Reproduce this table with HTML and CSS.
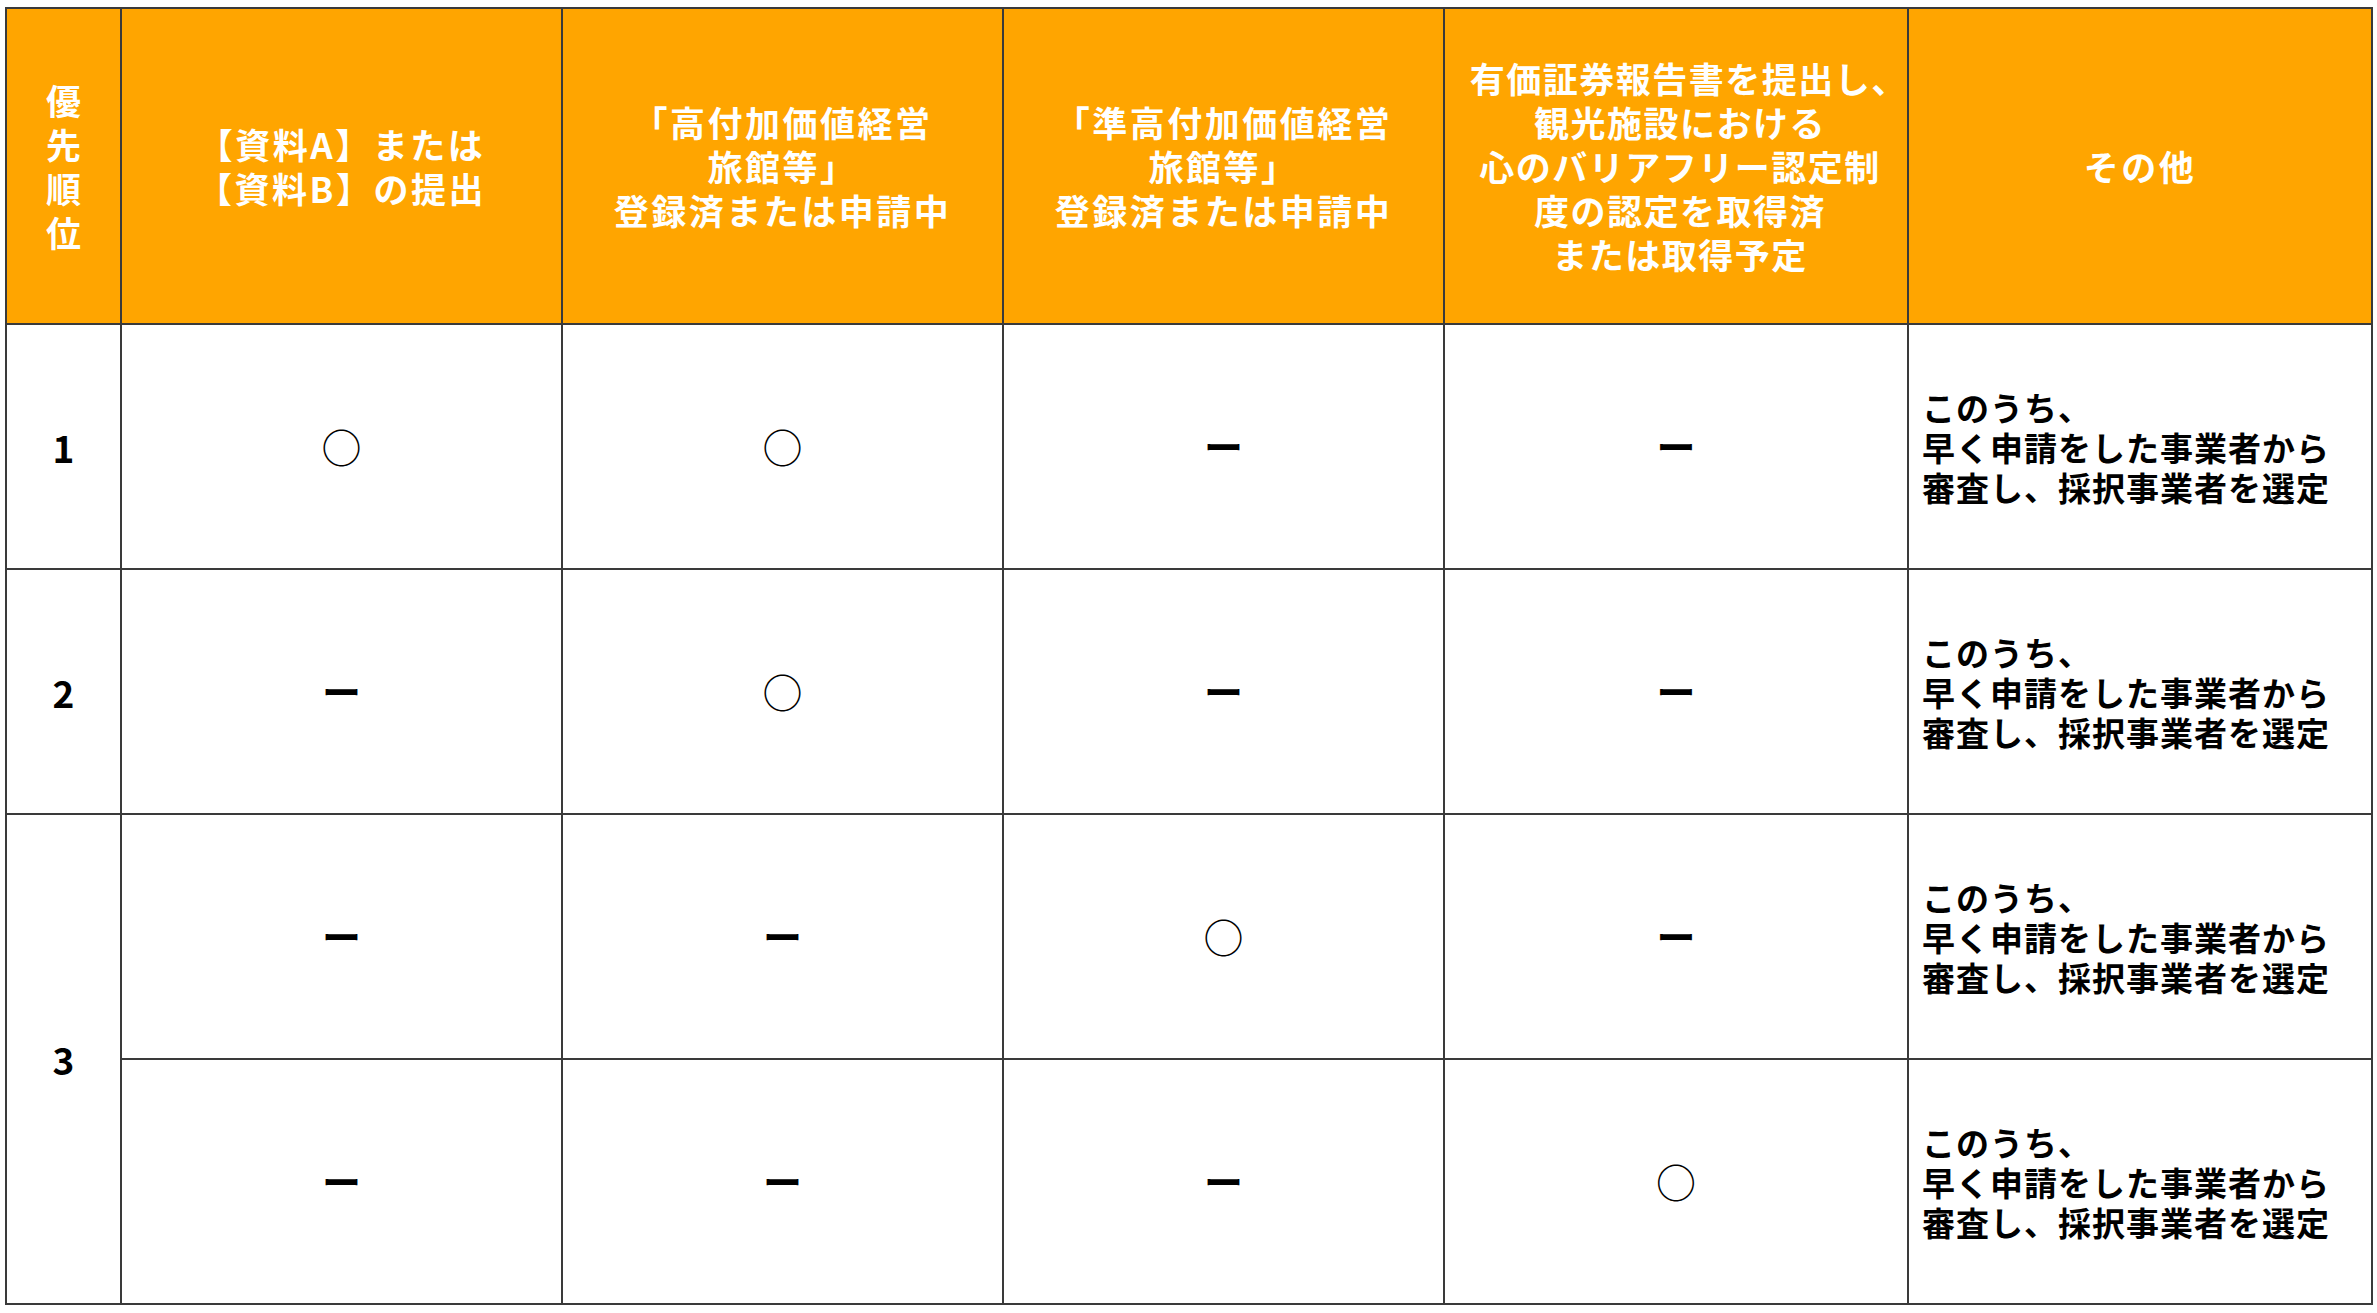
FILE: index.html
```html
<!DOCTYPE html>
<html lang="ja">
<head>
<meta charset="utf-8">
<title>優先順位</title>
<link rel="stylesheet" href="styles.css">
</head>
<body>
<table class="priority">
  <colgroup>
    <col class="c-rank">
    <col class="c-mid">
    <col class="c-mid">
    <col class="c-mid">
    <col class="c-wide">
    <col class="c-wide">
  </colgroup>
  <thead>
    <tr class="head-row">
      <th class="rank-head">優<br>先<br>順<br>位</th>
      <th>【資料A】または<br>【資料B】の提出</th>
      <th>「高付加価値経営<br>旅館等」<br>登録済または申請中</th>
      <th>「準高付加価値経営<br>旅館等」<br>登録済または申請中</th>
      <th class="long-head">有価証券報告書を提出し<span class="punct">、</span><br>観光施設における<br>心のバリアフリー認定制<br>度の認定を取得済<br>または取得予定</th>
      <th>その他</th>
    </tr>
  </thead>
  <tbody>
    <tr>
      <td class="rank">1</td>
      <td class="mark"><span class="yes">○</span></td>
      <td class="mark"><span class="yes">○</span></td>
      <td class="mark"><span class="no">ー</span></td>
      <td class="mark"><span class="no">ー</span></td>
      <td class="note">このうち、<br>早く申請をした事業者から<br>審査し、採択事業者を選定</td>
    </tr>
    <tr>
      <td class="rank">2</td>
      <td class="mark"><span class="no">ー</span></td>
      <td class="mark"><span class="yes">○</span></td>
      <td class="mark"><span class="no">ー</span></td>
      <td class="mark"><span class="no">ー</span></td>
      <td class="note">このうち、<br>早く申請をした事業者から<br>審査し、採択事業者を選定</td>
    </tr>
    <tr>
      <td class="rank" rowspan="2">3</td>
      <td class="mark"><span class="no">ー</span></td>
      <td class="mark"><span class="no">ー</span></td>
      <td class="mark"><span class="yes">○</span></td>
      <td class="mark"><span class="no">ー</span></td>
      <td class="note">このうち、<br>早く申請をした事業者から<br>審査し、採択事業者を選定</td>
    </tr>
    <tr>
      <td class="mark"><span class="no">ー</span></td>
      <td class="mark"><span class="no">ー</span></td>
      <td class="mark"><span class="no">ー</span></td>
      <td class="mark"><span class="yes">○</span></td>
      <td class="note">このうち、<br>早く申請をした事業者から<br>審査し、採択事業者を選定</td>
    </tr>
  </tbody>
</table>
</body>
</html>
```

FILE: styles.css
```css
html, body {
  margin: 0;
  padding: 0;
  background: #ffffff;
}

body {
  padding: 7px 0 0 5px;
  font-family: "Noto Sans CJK JP", "Noto Sans", sans-serif;
}

.priority {
  border-collapse: collapse;
  table-layout: fixed;
  width: 2366px;
}

.c-rank { width: 115px; }
.c-mid { width: 441px; }
.c-wide { width: 464px; }

.priority th,
.priority td {
  border: 2px solid #3a3a3a;
  padding: 0;
  vertical-align: middle;
}

.head-row {
  height: 316px;
}

.priority th {
  background: #ffa500;
  color: #ffffff;
  font-weight: 700;
  font-size: 35px;
  line-height: 44px;
  letter-spacing: 2.5px;
  text-align: center;
}

.priority th.rank-head {
  letter-spacing: 0;
}

.priority th.long-head {
  letter-spacing: 1.5px;
  padding-left: 8px;
}

.punct {
  margin-right: -0.5em;
}

.priority tbody tr {
  height: 245px;
}

.rank {
  text-align: center;
  font-size: 37px;
  font-weight: 700;
  color: #000;
}

.mark {
  text-align: center;
  color: #000;
}

.yes {
  font-size: 40px;
  font-weight: 400;
  line-height: 1;
}

.no {
  font-size: 39px;
  font-weight: 700;
  line-height: 1;
}

.note {
  padding-left: 13px !important;
  text-align: left;
  font-size: 33px;
  font-weight: 700;
  line-height: 40px;
  letter-spacing: 1px;
  color: #000;
}
```
